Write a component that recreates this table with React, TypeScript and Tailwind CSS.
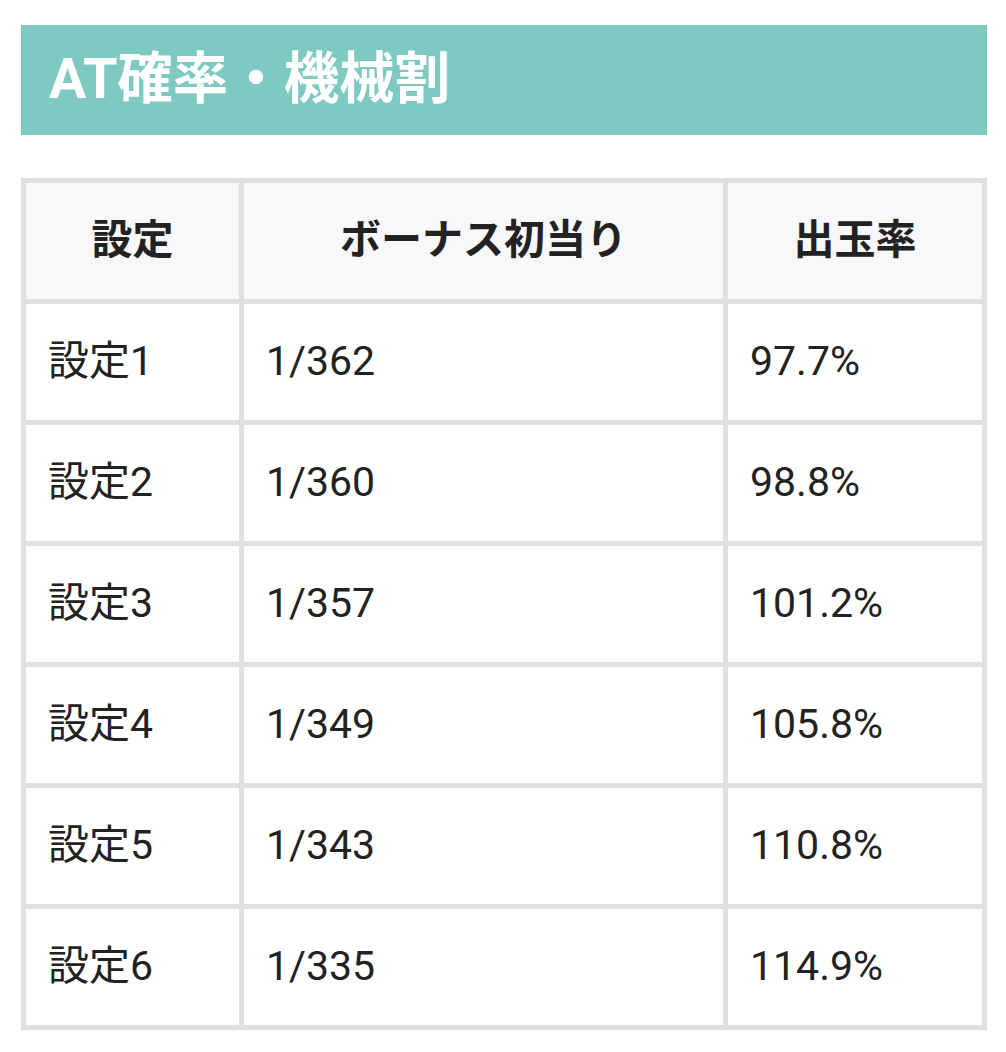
const rows = [
  ['設定1', '1/362', '97.7%'],
  ['設定2', '1/360', '98.8%'],
  ['設定3', '1/357', '101.2%'],
  ['設定4', '1/349', '105.8%'],
  ['設定5', '1/343', '110.8%'],
  ['設定6', '1/335', '114.9%'],
]

const headers = ['設定', 'ボーナス初当り', '出玉率']

export default function App() {
  return (
    <div
      className="min-h-[1052px] bg-white pl-[21px] pr-[19px] pt-[25px] text-[#222]"
      style={{ fontFamily: 'Roboto, "Noto Sans CJK JP", sans-serif' }}
    >
      <h2 className="flex h-[110px] items-center bg-[#7ecac3] pl-[28px] text-[55.5px] font-bold leading-none text-white">
        AT確率・機械割
      </h2>

      <div className="mt-[43px] grid grid-cols-[213px_479px_1fr] gap-[5px] bg-[#e0e0e0] p-[5px]">
        {headers.map((h) => (
          <div
            key={h}
            className="flex h-[116px] items-center justify-center bg-[#f8f8fa] text-[41px] font-bold"
          >
            {h}
          </div>
        ))}
        {rows.map((r) =>
          r.map((cell, i) => (
            <div
              key={r[0] + i}
              className="flex h-[116px] items-center bg-white pl-[22px] text-[41px]"
            >
              {cell}
            </div>
          ))
        )}
      </div>
    </div>
  )
}
